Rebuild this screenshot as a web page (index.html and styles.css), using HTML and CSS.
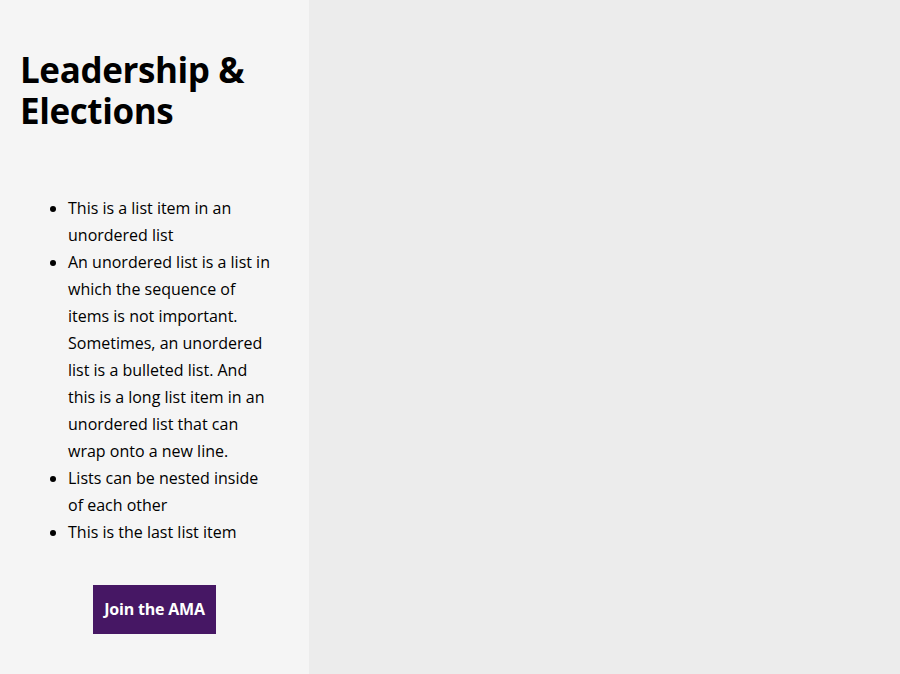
FILE: index.html
```html
<!DOCTYPE html>
<html lang="en">
<head>
<meta charset="utf-8">
<title>Leadership &amp; Elections</title>
<link rel="stylesheet" href="styles.css">
</head>
<body>
<div class="page">
  <aside class="sidebar">
    <h1 class="title">Leadership &amp; Elections</h1>
    <ul class="list">
      <li>This is a list item in an unordered list</li>
      <li>An unordered list is a list in which the sequence of items is not important. Sometimes, an unordered list is a bulleted list. And this is a long list item in an unordered list that can wrap onto a new line.</li>
      <li>Lists can be nested inside of each other</li>
      <li>This is the last list item</li>
    </ul>
    <div class="actions">
      <a class="button" href="#">Join the AMA</a>
    </div>
  </aside>
  <main class="main"></main>
</div>
</body>
</html>
```
FILE: styles.css
```css
html, body {
  margin: 0;
  padding: 0;
  height: 100%;
}
body {
  font-family: "Open Sans", "Noto Sans", sans-serif;
  color: #000;
  background: #ececec;
}
.page {
  display: flex;
  height: 674px;
}
.sidebar {
  width: 309px;
  flex: none;
  background: #f5f5f5;
  padding: 49px 20px 0 20px;
  box-sizing: border-box;
}
.main {
  flex: 1;
  background: #ececec;
}
.title {
  margin: 0;
  font-size: 35px;
  line-height: 41px;
  font-weight: 700;
  letter-spacing: -0.4px;
}
.list {
  margin: 64px 0 0 0;
  padding: 0 12px 0 48px;
  font-size: 16px;
  line-height: 27px;
}
.actions {
  display: flex;
  justify-content: center;
  margin-top: 39px;
}
.button {
  display: block;
  background: #461764;
  color: #fff;
  text-decoration: none;
  font-weight: 700;
  font-size: 16px;
  padding: 0 11px;
  line-height: 49px;
  letter-spacing: -0.2px;
}
```
